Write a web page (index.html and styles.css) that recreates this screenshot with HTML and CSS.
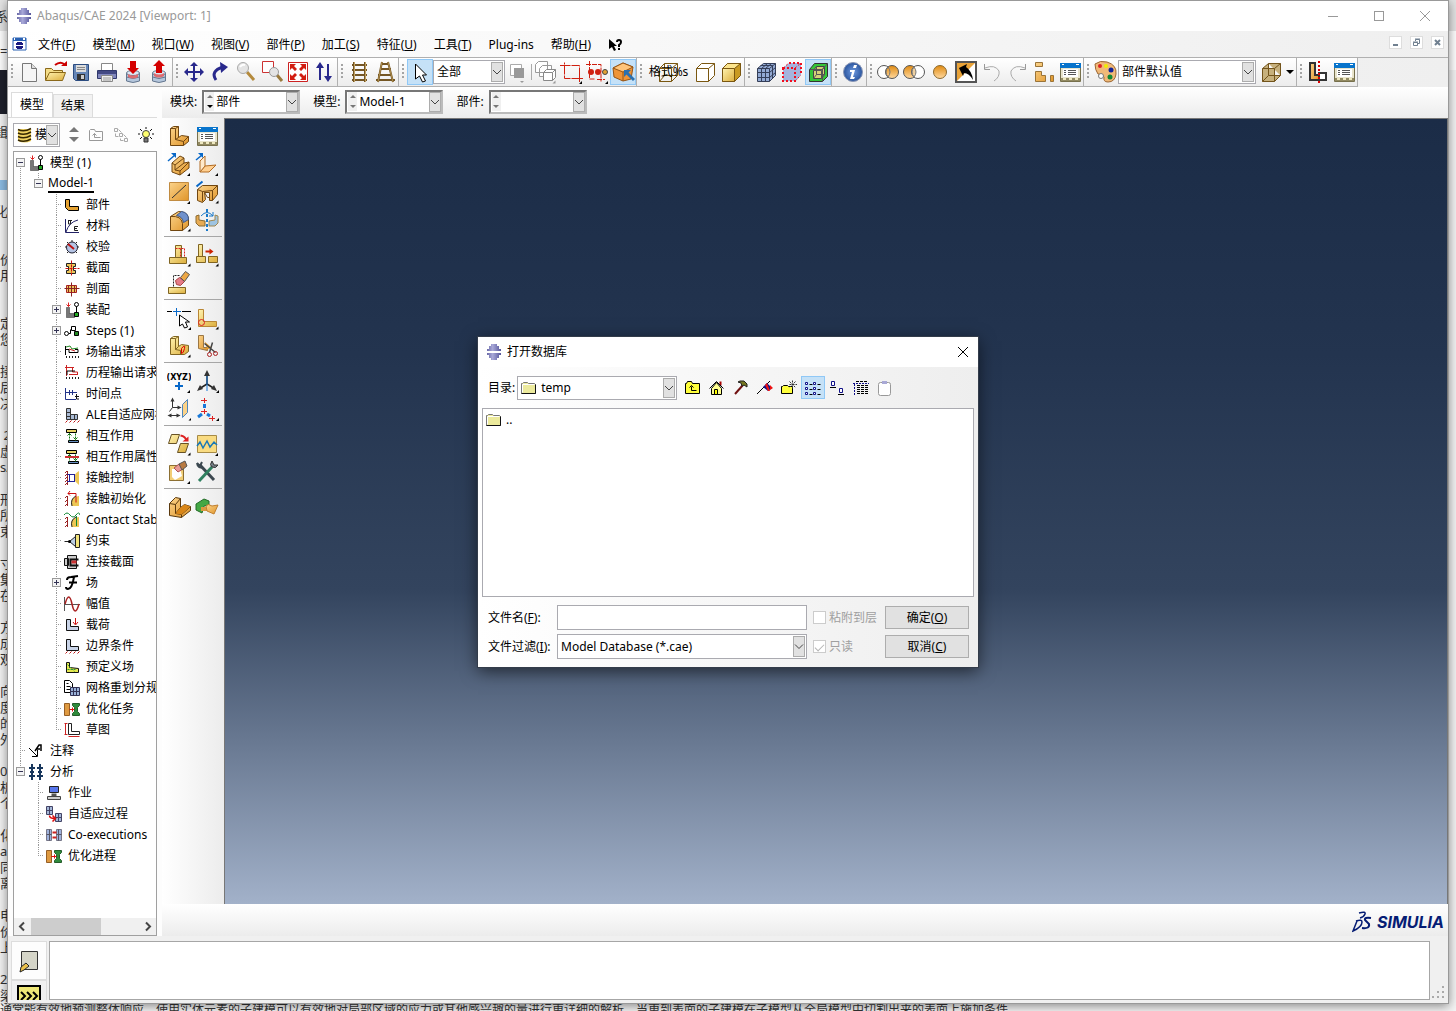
FILE: index.html
```html
<!DOCTYPE html>
<html lang="zh-CN">
<head>
  <meta charset="UTF-8">
  <meta name="viewport" content="width=device-width, initial-scale=1.0">
  <title>Abaqus/CAE 2024 [Viewport: 1]</title>
  <link rel="stylesheet" href="styles.css">
</head>
<body>
  <!-- Shared icons -->
  <svg class="sprite" aria-hidden="true">
    <defs>
      <linearGradient id="gold" x1="0" y1="0" x2="1" y2="1"><stop offset="0" stop-color="#fbd38a"/><stop offset="1" stop-color="#e0952a"/></linearGradient>
      <linearGradient id="sand" x1="0" y1="0" x2="1" y2="1"><stop offset="0" stop-color="#fff3b0"/><stop offset="1" stop-color="#dcae3c"/></linearGradient>
      <linearGradient id="sun" x1="0" y1="0" x2="0" y2="1"><stop offset="0" stop-color="#e08a10"/><stop offset="1" stop-color="#ffd9a0"/></linearGradient>
      <radialGradient id="blue"><stop offset="0" stop-color="#6f9ae0"/><stop offset="1" stop-color="#2a559e"/></radialGradient>
      <linearGradient id="purple"><stop offset="0" stop-color="#6a6aa8"/><stop offset=".4" stop-color="#a8a8d8"/><stop offset="1" stop-color="#55559a"/></linearGradient>
    </defs>
    <symbol id="app" viewBox="0 0 16 16"><path d="M5 0h6v2h2v3h2v2H1V5h2V2h2zM1 9h14v2h-2v3h-2v2H5v-2H3v-3H1z" fill="url(#purple)"/></symbol>
    <symbol id="mdi" viewBox="0 0 16 16"><path d="M1 1h13v12H1z" fill="#fff" stroke="#2a62b4"/><path d="M1 1h13v3H1z" fill="#2a62b4"/><path d="M11 1h2v2h-2zM2 1h1v2H2z" fill="#fff"/><path d="M5 5h5v1h1v2H4V6h1zM4 9h7v2h-1v1H5v-1H4z" fill="#1a1a80"/></symbol>
    <symbol id="new" viewBox="0 0 24 24"><path d="M5.500 3.500h9l5 5v13h-14z" fill="#f5f5f5" stroke="#777"/><path d="M14.500 3.500v5h5" fill="#ddd" stroke="#777"/></symbol>
    <symbol id="open" viewBox="0 0 24 24"><path d="M2.500 20V8.500h6l2 2h9v3" fill="#f4dd88" stroke="#8a681a"/><path d="M2.500 20.500l4-8h16l-3 8z" fill="url(#sand)" stroke="#8a681a"/><path d="M12 5q5-4 9-1" fill="none" stroke="#c00" stroke-width="2"/><path d="M18 6h6V1z" fill="#c00"/></symbol>
    <symbol id="save" viewBox="0 0 24 24"><path d="M4.500 4.500h15v16h-13l-2-2z" fill="#6686b6" stroke="#2b4c80"/><path d="M7 5h10v7H7z" fill="#ddd"/><path d="M8 7.500h8M8 9.500h8" stroke="#888"/><path d="M8 14h8v6H8z" fill="#333"/><path d="M12 15h3v4h-3z" fill="#ccc"/></symbol>
    <symbol id="print" viewBox="0 0 24 24"><path d="M6.500 3.500h11v7h-11z" fill="#fff" stroke="#888"/><path d="M2.500 10.500h19v8h-19z" fill="#8187bd" stroke="#30386c"/><path d="M3 11h18v3H3z" fill="#434984"/><path d="M6.500 15.500h11v6h-11z" fill="#eee" stroke="#888"/><path d="M8 18h8M8 20h8" stroke="#999"/></symbol>
    <symbol id="db" viewBox="0 0 24 24"><path d="M5.500 13v8q6.500 3 13 0v-8" fill="#b4c6dc" stroke="#667890"/><ellipse cx="12" cy="13" rx="6.500" ry="2.500" fill="#dce6f2" stroke="#667890"/><path d="M5.500 17q6.500 3 13 0" fill="none" stroke="#667890"/></symbol>
    <symbol id="db-in" viewBox="0 0 24 24"><use href="#db"/><path d="M9 1h6v7h3l-6 6-6-6h3z" fill="#d40000"/><path d="M7 14q5 3 10 0v3q-5 3-10 0z" fill="#dc6c70"/></symbol>
    <symbol id="db-out" viewBox="0 0 24 24"><use href="#db"/><path d="M9 13h6V6h3l-6-6-6 6h3z" fill="#d40000"/><path d="M7 13q5 3 10 0v3q-5 3-10 0z" fill="#dc6c70"/></symbol>
    <symbol id="pan" viewBox="0 0 24 24"><path d="M12 5v14M5 12h14" stroke="#28288c" stroke-width="2"/><path d="M12 2l4 4H8zM12 22l4-4H8zM2 12l4-4v8zM22 12l-4-4v8z" fill="#28288c"/></symbol>
    <symbol id="rotate" viewBox="0 0 24 24"><path d="M8 20Q2 11 15 7" fill="none" stroke="#28288c" stroke-width="3"/><path d="M12 2l8 5-7 6z" fill="#28288c"/></symbol>
    <symbol id="zoom" viewBox="0 0 24 24"><path d="M13 12l7 8" stroke="#b48a3c" stroke-width="3"/><circle cx="9" cy="8" r="5.500" fill="#e4e4e4" stroke="#aaa"/><path d="M6 7q2-3 5-2" stroke="#fff" stroke-width="2" fill="none"/></symbol>
    <symbol id="boxzoom" viewBox="0 0 24 24"><path d="M2.500 1.500h11v11h-11z" fill="#fff" stroke="#c33"/><path d="M17 15l5 6" stroke="#9a7a3c" stroke-width="3"/><circle cx="14" cy="12" r="4.500" fill="#e4e4e4" stroke="#999"/></symbol>
    <symbol id="fit" viewBox="0 0 24 24"><path d="M2.500 2.500h19v19h-19z" fill="#fff" stroke="#c22"/><path d="M4 4h6L8 6l3 3-2 2-3-3-2 2zM20 4v6l-2-2-3 3-2-2 3-3-2-2zM4 20v-6l2 2 3-3 2 2-3 3 2 2zM20 20h-6l2-2-3-3 2-2 3 3 2-2z" fill="#d21c10"/></symbol>
    <symbol id="updown" viewBox="0 0 24 24"><path d="M8 20V7M16 4v13" stroke="#28288c" stroke-width="2"/><path d="M8 2l4 6H4zM16 22l4-6h-8z" fill="#28288c"/></symbol>
    <symbol id="ladder" viewBox="0 0 24 24"><path d="M7 2v20M18 2v20M5 5h15M5 10h15M5 15h15M5 20h15" stroke="#745624" stroke-width="2"/><path d="M7.500 2v20M18.500 2v20" stroke="#c0a060"/></symbol>
    <symbol id="persp" viewBox="0 0 24 24"><path d="M9 2L5 22M15 2l5 20M8 4h8M7 9h11M5 15h14M3 20h19" stroke="#745624" stroke-width="2" fill="none"/><path d="M9 2L5 22M15 2l5 20" stroke="#b09050"/></symbol>
    <symbol id="cursor" viewBox="0 0 24 24"><path d="M7.500 4v15l4-3 3 6 3-1-3-6h4z" fill="#fff" stroke="#000"/></symbol>
    <symbol id="squares" viewBox="0 0 24 24"><path d="M4.500 4.500h11v11h-11z" fill="#fff" stroke="#aaa"/><path d="M8 8h10v10H8z" fill="#999"/><path d="M14 21h4l-2 2z" fill="#999"/></symbol>
    <symbol id="cubes-gray" viewBox="-.5 -.5 24 24"><path d="M2 4l3-3h9v8l-3 3H2zM6 8l3-3h9v8l-3 3H6z" fill="#fff" stroke="#999"/><path d="M10 12l3-3h9v8l-3 3h-9zM10 12h9v8M19 12l3-3" fill="#fff" stroke="#888"/><path d="M19 23l3-3v3z" fill="#999"/></symbol>
    <symbol id="redrect" viewBox="0 0 24 24"><path d="M2.500 5.500h18v13h-15v-16" fill="none" stroke="#d02010" stroke-dasharray="9 1"/><path d="M1 5.500h4M15 18.500h9M20.500 14v8" stroke="#d02010"/><path d="M20 24l3-3v3z"/></symbol>
    <symbol id="reddots" viewBox="0 0 24 24"><path d="M1 4.500h15v17M4.500 1v18h5M12 19.500h8" fill="none" stroke="#d02010" stroke-dasharray="5 1"/><circle cx="6" cy="12" r="3" fill="#d02010"/><circle cx="13" cy="12" r="3" fill="#d02010"/><circle cx="20" cy="12" r="2.500" fill="#e2a030" stroke="#444"/><path d="M20 24l3-3v3z"/></symbol>
    <symbol id="orangebox" viewBox="0 0 24 24"><path d="M2 8l10-5 10 4-2 12-8 2-9-4z" fill="#ee9438" stroke="#965414"/><path d="M2 8l10-5 10 4-10 5z" fill="#ffc47a" stroke="#965414"/><path d="M12 12v9" stroke="#965414"/><path d="M15 12l8 8" stroke="#2a70b0" stroke-width="3"/><path d="M13 10h7l-7 7z" fill="#2a70b0"/></symbol>
    <symbol id="wirecube" viewBox="-.5 -.5 24 24"><path d="M3 8h12v13H3zM8 3h13v12H8zM3 8l5-5M15 8l6-5M3 21l5-6M15 21l6-6" fill="none" stroke="#7a5710"/></symbol>
    <symbol id="hidcube" viewBox="-.5 -.5 24 24"><path d="M3 8l5-5h13v12l-6 6H3zM3 8h12v13M15 8l6-5" fill="#fff" stroke="#7a5710"/></symbol>
    <symbol id="solidcube" viewBox="-.5 -.5 24 24"><path d="M3 8l5-5h13v12l-6 6H3z" fill="#c99a22" stroke="#7a5710"/><path d="M3 8h12v13H3z" fill="url(#sand)" stroke="#7a5710"/><path d="M3 8l5-5h13l-6 5z" fill="#fbe48c" stroke="#7a5710"/></symbol>
    <symbol id="meshcube" viewBox="-.5 -.5 24 24"><path d="M3 8l6-5h12v12l-6 6H3z" fill="#93aad4"/><path d="M3 8l6-5h12v12l-6 6H3zM3 8h12v13M15 8l6-5M7 8v13M11 8v13M3 12h12l6-5M3 17h12l6-5M6 5h12v13M13 3L7 8M17 3l-6 5" fill="none" stroke="#343e58"/></symbol>
    <symbol id="redcube" viewBox="0 0 24 24"><path d="M3 8l6-5h12v12l-5 6H3z" fill="#a4b4de"/><path d="M3 8h12v13H3zM9 3h12v12" fill="none" stroke="#f01020" stroke-width="2" stroke-dasharray="2 2"/><path d="M3 8l6-5M15 8l6-5M15 21l6-6" stroke="#f01020" stroke-dasharray="2 2"/></symbol>
    <symbol id="greencube" viewBox="-.5 -.5 24 24"><path d="M3 9l5-6h13v13l-5 5H3z" fill="#34c638" stroke="#333"/><path d="M7 10l3-4h8v8l-3 4H7z" fill="#d5d278" stroke="#444"/><path d="M7 10h8v8M15 10l3-4M10 6v8h8M10 14l-3 4M3 9h13v12M16 9l5-6" fill="none" stroke="#555"/></symbol>
    <symbol id="info" viewBox="0 0 24 24"><circle cx="12" cy="12" r="9.500" fill="url(#blue)" stroke="#8a96b4"/><path d="M13 5h3l-1 3h-3zM9 10h5l-2 7h2l-1 2H9l2-7H9z" fill="#fff"/></symbol>
    <symbol id="venn-r" viewBox="0 0 24 24"><circle cx="8" cy="12" r="6.500" fill="#fff" stroke="#555"/><circle cx="16" cy="12" r="6.500" fill="url(#sun)" stroke="#555"/><path d="M12 7q4 5 0 10q-4-5 0-10" fill="none" stroke="#777"/></symbol>
    <symbol id="venn-l" viewBox="0 0 24 24"><circle cx="8" cy="12" r="6.500" fill="url(#sun)" stroke="#555"/><circle cx="16" cy="12" r="6.500" fill="#fff" stroke="#555"/><path d="M12 7q4 5 0 10q-4-5 0-10" fill="#eed0a0" stroke="#777"/></symbol>
    <symbol id="circle" viewBox="0 0 24 24"><circle cx="12" cy="12" r="6.500" fill="url(#sun)" stroke="#8b6a30"/></symbol>
    <symbol id="replace" viewBox="0 0 24 24"><path d="M2 2h20v20H2z" fill="#fff"/><path d="M2 2h20L2 22z" fill="#e9a338"/><path d="M2 2h20v20H2z" fill="none" stroke="#555" stroke-width="2"/><path d="M5 8l8-4-1 3q6 4 7 13-4-7-9-7l-1 3z"/></symbol>
    <symbol id="undo" viewBox="0 0 24 24"><path d="M5 8q10-4 14 3 1 6-5 10" fill="none" stroke="#aaa"/><path d="M4.500 4v5.500H10" fill="none" stroke="#999"/></symbol>
    <symbol id="redo" viewBox="0 0 24 24"><path d="M19 8Q9 4 5 11q-1 6 5 10" fill="none" stroke="#aaa"/><path d="M19.500 4v5.500H14" fill="none" stroke="#999"/></symbol>
    <symbol id="pieces" viewBox="0 0 24 24"><path d="M3.500 2.500h7v4h-7zM3.500 11.500h6v4h4v6h-10zM18.500 15.500h3v6h-3z" fill="url(#gold)" stroke="#9a7438"/></symbol>
    <symbol id="table" viewBox="0 0 24 24"><path d="M2.500 3.500h20v18h-20z" fill="#e8e4cc" stroke="#77704c"/><path d="M2 3h21v5H2z" fill="#0874cc"/><path d="M4 4h2v1H4zM18 4h3v1h-3z" fill="#fff"/><path d="M5 9h15v8H5z" fill="#fff"/><path d="M6 10.500h2M10 10.500h8M6 12.500h2M10 12.500h8M6 14.500h2M10 14.500h8" stroke="#555"/><path d="M3 18h19v3H3z" fill="#938b63"/><path d="M5 19h3M11 19h3M17 19h3" stroke="#eee8c0" stroke-width="2"/></symbol>
    <symbol id="palette" viewBox="0 0 24 24"><path d="M2 4q5-4 12-2 10 3 9 12-1 8-8 8-5 0-4-5-1-3-6-3-3-4-3-10z" fill="#f0b978" stroke="#9c6632"/><circle cx="7" cy="6" r="2" fill="#d22"/><circle cx="13" cy="6" r="2" fill="#ee0"/><circle cx="18" cy="10" r="2.500" fill="#129"/><circle cx="17" cy="17" r="2.500" fill="#183"/><circle cx="8" cy="16" r="2.500" fill="#fff" stroke="#777"/></symbol>
    <symbol id="tancube" viewBox="-.5 -.5 24 24"><path d="M3 8l6-5h12v12l-6 6H3zM3 8h12v13M15 8l6-5M9 3v12h12M9 15l-6 6" fill="#c6b07c" stroke="#73541b"/></symbol>
    <symbol id="partcut" viewBox="0 0 24 24"><path d="M4 3h5v12h4v5H4z" fill="url(#gold)" stroke="#333" stroke-width="2"/><path d="M13 13h7v7h-7z" fill="#fff" stroke="#333" stroke-width="2"/><path d="M13 1v22" stroke="#d00" stroke-width="2" stroke-dasharray="2 2"/></symbol>
    <symbol id="help" viewBox="0 0 16 16"><path d="M1 2v10l3-2 2 4 2-1-2-4h3z"/><path d="M9 5q0-2 2-2t2 2q0 2-2 3v2" fill="none" stroke="#000" stroke-width="2"/><path d="M10 11h2v2h-2z"/></symbol>

    <symbol id="part" viewBox="-.5 -.5 24 24"><path d="M3 4l3-2h5v11l3-2 7 1v5l-5 4H3z" fill="url(#gold)" stroke="#704611"/><path d="M3 4h5v11l8 2v4M8 4l3-2M8 15l3-2M16 17l5-5" fill="none" stroke="#704611"/></symbol>
    <symbol id="extrude" viewBox="0 0 24 24"><path d="M5 11l8-7 4 2v5l5-1v6l-9 7-8-3z" fill="url(#gold)" stroke="#704611"/><path d="M5 11l3 2v5l5 1v4M8 13l9-7M8 18l9-7M13 19l9-9" fill="none" stroke="#704611"/><path d="M1 9l7-6" stroke="#0868c8" stroke-width="1.500"/><path d="M4 1h5v5z" fill="#0868c8"/><path d="M20 24l3-3v3z"/></symbol>
    <symbol id="shell" viewBox="0 0 24 24"><path d="M5 20l5-6 11-1-7 7z" fill="#ffcf90" stroke="#b26c24"/><path d="M5 20V9l5-5v10z" fill="#ffe9ca" stroke="#b26c24"/><path d="M1 8l6-5" stroke="#0868c8" stroke-width="1.500"/><path d="M3 1h5v5z" fill="#0868c8"/><path d="M20 24l3-3v3z"/></symbol>
    <symbol id="wire" viewBox="0 0 24 24"><path d="M2.500 2.500h19v18h-19z" fill="url(#gold)" stroke="#c18b40"/><path d="M5 18L19 5" stroke="#333"/><path d="M20 24l3-3v3z"/></symbol>
    <symbol id="cutext" viewBox="-.5 -.5 24 24"><path d="M2 9l5-4h15v9l-5 6h-3v-8H9l1 7-3 3-5-2z" fill="url(#gold)" stroke="#704611"/><path d="M2 9l5 2 10-1 5-5M7 11v10M17 10v10M9 12l3 5h2" fill="none" stroke="#704611"/><path d="M1 6l6-5" stroke="#0868c8" stroke-width="2"/><path d="M20 23l3-3v3z"/></symbol>
    <symbol id="round" viewBox="-.5 -.5 24 24"><path d="M3 8l8-5q9 0 10 7v7l-6 5H3z" fill="url(#gold)" stroke="#704611"/><path d="M3 8q11-1 12 7v7" fill="none" stroke="#704611"/><path d="M9 7l5-4q7 1 7 8l-5 3q-1-6-7-7z" fill="#6f91cc" stroke="#3b588c"/><path d="M20 23l3-3v3z"/></symbol>
    <symbol id="mirror" viewBox="0 0 24 24"><path d="M1 8l3-1v5l6 1v5H4l-3-3z" fill="#e7ab54" stroke="#8a6a30"/><path d="M23 8l-3-1v5l-6 1v5h6l3-3z" fill="#9ec4e2" stroke="#a08850"/><path d="M12 1v22" stroke="#1878c8" stroke-width="2" stroke-dasharray="3 2"/><path d="M6 8q6-7 12 0M18 4v4h-4" fill="none" stroke="#1878c8"/></symbol>
    <symbol id="support" viewBox="-.5 -.5 24 24"><path d="M8 2h6v12H8zM2 14h17v6H2z" fill="url(#sand)" stroke="#806523"/><path d="M8 5h9v9M13 5v9" fill="none" stroke="#d22" stroke-dasharray="2 1"/><path d="M20 23l3-3v3z"/></symbol>
    <symbol id="offset" viewBox="-.5 -.5 24 24"><path d="M3 1h4v12H3zM1 13h9v6H1zM13 13h9v6h-9z" fill="url(#sand)" stroke="#806523"/><path d="M10 8h5" stroke="#c20" stroke-width="2"/><path d="M14 5l4 3-4 3z" fill="#c20"/><path d="M20 23l3-3v3z"/></symbol>
    <symbol id="erase" viewBox="-.5 -.5 24 24"><path d="M1 16h17v6H1z" fill="url(#sand)" stroke="#806523"/><path d="M6 15V4h6" fill="none" stroke="#222" stroke-dasharray="2 1"/><path d="M8 9l4-3 5 4-4 4-4-1z" fill="#e57c88" stroke="#a44"/><path d="M13 6l5-6 4 3-5 7z" fill="#eda745" stroke="#555"/></symbol>
    <symbol id="pointline" viewBox="0 0 24 24"><path d="M0 5.500h5M15 5.500h9" stroke="#000"/><path d="M6 5.500h8M9.500 2v8" stroke="#0868c8" stroke-width="1"/><path d="M12.500 9v11l3-2 2 4 3-1-2-5h4z" fill="#fff" stroke="#000"/><path d="M21 24l3-3v3z"/></symbol>
    <symbol id="edge" viewBox="-.5 -.5 24 24"><path d="M3 3h5v12h13v5H3z" fill="url(#sand)" stroke="#b98635"/><circle cx="6" cy="16" r="3" fill="none" stroke="#d22"/><path d="M20 23l3-3v3z"/></symbol>
    <symbol id="face" viewBox="-.5 -.5 24 24"><path d="M3 4l3-2h5v10l3-2 7 1v6l-4 3H3z" fill="url(#sand)" stroke="#806523"/><path d="M3 4h5v11l5 1v4M8 4l3-2M8 15l3-3" fill="none" stroke="#806523"/><path d="M14 14q4-5 3 0t-3 5z" fill="none" stroke="#d00"/><path d="M20 23l3-3v3z"/></symbol>
    <symbol id="scissor" viewBox="-.5 -.5 24 24"><path d="M3 1h5v12h4v3L3 14z" fill="url(#gold)" stroke="#9b7744"/><path d="M9 7l7 6-4 2z" fill="#e8a030"/><path d="M9 9l11 9M17 8l-3 10" stroke="#444" stroke-width="1.500"/><circle cx="14" cy="20" r="2" fill="none" stroke="#a22"/><circle cx="20" cy="19" r="2" fill="none" stroke="#a22"/></symbol>
    <symbol id="xyz" viewBox="0 0 24 24"><text x="12" y="11" text-anchor="middle" class="xyz-text">(XYZ)</text><path d="M8 17h8M12 13v8" stroke="#0868c8" stroke-width="2"/><path d="M20 24l3-3v3z"/></symbol>
    <symbol id="axes" viewBox="0 0 24 24"><path d="M12 5v10M12 15l-8 5M12 15l8 5" stroke="#222" stroke-width="1.500"/><path d="M12 1l3 6H9zM2 22l3-6 3 4zM22 22l-3-6-3 4z" fill="#333"/><path d="M12 7v15" stroke="#1878d8"/><path d="M21 24l3-3v3z"/></symbol>
    <symbol id="plane" viewBox="-.5 -.5 24 24"><path d="M5 10V3M5 10l-3 4M5 10h7M2 18h10" stroke="#333"/><path d="M5 0l2 4H3zM14 10l-4-2v4zM0 18l4-2v4zM13 18l-4-2v4z" fill="#333"/><path d="M15 7l5-5v13l-5 5z" fill="#fbd38a" stroke="#4e86bd"/><path d="M21 23l3-3v3z"/></symbol>
    <symbol id="points" viewBox="0 0 24 24"><path d="M6 3.500h6M9.500 1v5M6 14.500h6M9.500 12v5M14 21.500h6M17.500 19v5" stroke="#d22"/><path d="M9.500 7v4M3 20l4-3M12 17l3 2" stroke="#1878d8" stroke-width="3"/><path d="M21 24l3-3v3z"/></symbol>
    <symbol id="moveplane" viewBox="-.5 -.5 24 24"><path d="M4 2h8l-3 9H1zM13 11h8l-3 9h-8z" fill="url(#sand)" stroke="#675226"/><path d="M13 3q5 1 6 5" fill="none" stroke="#d22" stroke-width="2"/><path d="M15 9h6V4z" fill="#d22"/><path d="M20 23l3-3v3z"/></symbol>
    <symbol id="wave" viewBox="0 0 24 24"><path d="M2.500 3.500h19v17h-19z" fill="#f9db81" stroke="#a68a46"/><path d="M2 14l3-4 3 6 4-7 3 6 4-5 3 3" fill="none" stroke="#1878b8" stroke-width="1.500"/><path d="M20 24l3-3v3z"/></symbol>
    <symbol id="clean" viewBox="0 0 24 24"><path d="M2.500 5.500h14v15h-14z" fill="#f2ce75" stroke="#8c6f32"/><path d="M5 9h8l2 7-7 4-3-3z" fill="#fff"/><path d="M7 8l5-4 4 5-5 3z" fill="#e89a97" stroke="#a55"/><path d="M12 4l6-3 2 5-5 4z" fill="#b87a42" stroke="#555"/><path d="M20 24l3-3v3z"/></symbol>
    <symbol id="tools" viewBox="0 0 24 24"><path d="M5 5l14 15" stroke="#3c4850" stroke-width="3"/><path d="M2 3l3 3 2-4M2 3q1 6 6 4" stroke="#3c4850" stroke-width="2" fill="none"/><path d="M4 21l13-14" stroke="#2f8060" stroke-width="3"/><path d="M17 1q-3 4 0 6 4 2 6-2l-4 0z" fill="#758088" stroke="#333"/></symbol>
    <symbol id="fillet" viewBox="-.5 -.5 24 24"><path d="M2 8l6-6 5 1v9l4-3 6 2v4l-9 7-12-2z" fill="url(#gold)" stroke="#5a390e"/><path d="M2 8l6 1v9l6 1v3M8 9l5-6M8 18l5-6M14 19l9-8" fill="none" stroke="#5a390e"/><path d="M8 18l5-6 4-3 6 2-9 8z" fill="#d98618"/></symbol>
    <symbol id="repair" viewBox="0 0 24 24"><path d="M1 9l8-5 5 2v4l-5 1-2 7-6-3z" fill="#43a844" stroke="#246b28"/><path d="M6 12h6v4H6z" fill="#d99a40"/><path d="M11 11q2-3 6 0l6-1-4 9-7-3z" fill="url(#gold)" stroke="#c08030"/></symbol>

    <symbol id="t-stack" viewBox="0 0 16 16"><path d="M1 2v12q7 3 13 0V2z" fill="#eed060"/><path d="M1 2.500q6 3 13-1M1 6q6 3 13-1M1 9.500q6 3 13-1M1 13q6 3 13-1" fill="none" stroke="#332600" stroke-width="1.500"/></symbol>
    <symbol id="t-up" viewBox="-.5 -.5 16 16"><path d="M1 13V3l1-1h4l1 2h7v9z" fill="none" stroke="#999"/><path d="M12 10H6V6M4 8l2-2 2 2" fill="none" stroke="#999"/></symbol>
    <symbol id="t-link" viewBox="-.5 -.5 16 16"><path d="M1 1h3v3H1zM6 6h3v3H6zM11 11h3v3h-3zM5 2l3 3M10 7l3 3M2 6v3h3M7 11v2h3" fill="none" stroke="#aaa"/></symbol>
    <symbol id="t-bulb" viewBox="0 0 16 16"><circle cx="8" cy="7" r="3.500" fill="#ffff70" stroke="#444"/><path d="M6 11h4v4H6z" fill="#777" stroke="#333"/><path d="M8 0v2M2 2l2 2M14 2l-2 2M0 7h2M14 7h2M2 12l2-2M14 12l-2-2" stroke="#111"/></symbol>
    <symbol id="t-model" viewBox="-.5 -.5 16 16"><path d="M2 5h3v6h5v4H2z" fill="#777" stroke="#333" stroke-dasharray="1 1"/><path d="M4 0v4M2 2l2 2 2-2" stroke="#d22" fill="none"/><circle cx="12" cy="2" r="2" fill="#fff" stroke="#000"/><path d="M12 4v6" stroke="#000"/><path d="M10 10h4v4h-4z" fill="#2a2" stroke="#000"/></symbol>
    <symbol id="t-part" viewBox="0 0 16 16"><path d="M1.500 2.500h4v7h9v4h-10l-3-3z" fill="#e4a130" stroke="#000"/></symbol>
    <symbol id="t-material" viewBox="0 0 16 16"><path d="M1.500 1v13.500H15M2 14q3-10 12-12" fill="none" stroke="#226"/><path d="M4 2.500h4M4.500 3v3h2V3M14 8.500h-3.500v4H14M11 10.500h2" fill="none" stroke="#222"/></symbol>
    <symbol id="t-calib" viewBox="0 0 16 16"><circle cx="8" cy="8.500" r="5.500" fill="#b4c4e4" stroke="#223"/><path d="M4 5l6 5" stroke="#b11" stroke-width="2"/><path d="M8 1v2M1 8h2M13 8h2M3 3l1 1M13 3l-1 1M3 14l1-1M13 14l-1-1" stroke="#222"/></symbol>
    <symbol id="t-section" viewBox="-.5 -.5 16 16"><path d="M2 3h9v3H9v4h2v3H2v-3h2V6H2z" fill="#edc65a" stroke="#222"/><path d="M7 0v16M1 8h14" stroke="#c11" stroke-dasharray="3 1"/></symbol>
    <symbol id="t-profile" viewBox="-.5 -.5 16 16"><path d="M2 4h10v7H2z" fill="#edc65a" stroke="#a22"/><path d="M7 1v14M0 7h15M4 4v7M10 4v7" stroke="#822"/></symbol>
    <symbol id="t-steps" viewBox="-.5 -.5 16 16"><circle cx="2" cy="10" r="2" fill="#fff" stroke="#000"/><path d="M4 10h2V6M7 3h4v4H7z" fill="#fff" stroke="#000"/><path d="M10 8h4v4h-4z" fill="#282" stroke="#000"/></symbol>
    <symbol id="t-field" viewBox="0 0 16 16"><path d="M1.500 2v9M2 5.500h3v3h9v-3h-3" fill="none" stroke="#000"/><path d="M2 3l4-1 2 3 6-1" fill="none" stroke="#282"/><path d="M5 5l6 2" stroke="#c22"/><path d="M2.500 12v3M5.500 12v3M8.500 12v3M11.500 12v3M14.500 12v3" stroke="#222" stroke-dasharray="2 1"/></symbol>
    <symbol id="t-hist" viewBox="0 0 16 16"><path d="M2.500 0v11M1 2.500h9M8.500 3v4h5v3M5 9.500h8" fill="none" stroke="#c22"/><path d="M3 10V6h8" fill="none" stroke="#000"/><path d="M2.500 12v3M5.500 12v3M8.500 12v3M11.500 12v3M14.500 12v3" stroke="#222" stroke-dasharray="2 1"/></symbol>
    <symbol id="t-time" viewBox="0 0 16 16"><path d="M1.500 2v11.500H12M2 6.500h11M5.500 4v5M8.500 4v5" fill="none" stroke="#238"/><path d="M12.500 8v5H15M11 10.500h4" stroke="#111" fill="none"/></symbol>
    <symbol id="t-ale" viewBox="-.5 -.5 16 16"><path d="M2 1h4v6h7v5H2z" fill="#aabbd5" stroke="#333"/><path d="M2 5h4M6 7v5M10 7v5M2 9h4" stroke="#333"/><path d="M1 15l2-2M5 15l2-2M9 15l2-2M13 15l2-2" stroke="#b11"/></symbol>
    <symbol id="t-inter" viewBox="-.5 -.5 16 16"><path d="M2 1h10v3H2z" fill="#e9d468" stroke="#000"/><path d="M4 12h10v2H4z" fill="#668dc0" stroke="#000"/><path d="M5 5v7M11 5v7" stroke="#171" stroke-dasharray="2 1"/><path d="M3 7l2-2 2 2M9 9l2 2 2-2" stroke="#171" fill="none"/></symbol>
    <symbol id="t-prop" viewBox="0 0 16 16"><use href="#t-inter"/><path d="M1 8h14" stroke="#c33" stroke-width="2"/></symbol>
    <symbol id="t-contact" viewBox="0 0 16 16"><path d="M3.500 1v14M1 3l2-2M1 6l2-2M1 9l2-2M1 12l2-2M1 15l2-2" stroke="#922"/><path d="M15 1q-10 6 0 14z" fill="#edc755"/><path d="M5.500 4v8M10.500 4v8M3 4.500h8M3 11.500h8" fill="none" stroke="#229"/></symbol>
    <symbol id="t-init" viewBox="0 0 16 16"><path d="M3.500 5v10M1 7l2-2M1 11l2-2M1 15l2-2" stroke="#922"/><path d="M15 5q-10 1-7 10h7z" fill="#edc755"/><path d="M12 5q-6 3-4 10" fill="none" stroke="#222"/><path d="M4 2.500h8v9M6 0L4 2.500l2 2" fill="none" stroke="#c11"/></symbol>
    <symbol id="t-stab" viewBox="0 0 16 16"><path d="M3.500 5v10M1 7l2-2M1 11l2-2M1 15l2-2" stroke="#922"/><path d="M15 5q-10 1-7 10h7z" fill="#edc755"/><path d="M12 5q-6 3-4 10" fill="none" stroke="#222"/><path d="M0 3q3-4 6 0t6 0 4 0M12.500 4v10" fill="none" stroke="#183"/></symbol>
    <symbol id="t-constraint" viewBox="-.5 -.5 16 16"><path d="M11 1h4v13h-4z" fill="#f3e47b" stroke="#222"/><path d="M0 8h5l6-5v10L5 8" fill="#bed0e6" stroke="#222"/><circle cx="5" cy="8" r="1.500"/></symbol>
    <symbol id="t-conn" viewBox="-.5 -.5 16 16"><path d="M3 1h9v13H3zM0 4h4v7H0z" fill="#ccc" stroke="#111"/><path d="M14 5H6v6h8" fill="none" stroke="#111" stroke-width="2"/><path d="M7 6h5v3H7z" fill="#c33"/></symbol>
    <symbol id="t-f" viewBox="0 0 16 16"><path d="M3 5q0-3 4-3l7-1M10 2Q8 14 4 14q-2 0-2-2M5 7.500h8" fill="none" stroke="#000" stroke-width="2"/></symbol>
    <symbol id="t-amp" viewBox="0 0 16 16"><path d="M.500 1v14M0 8.500h16" stroke="#555"/><path d="M1 8q4-14 7 0t7 0" fill="none" stroke="#a22" stroke-width="1.500"/></symbol>
    <symbol id="t-l" viewBox="-.5 -.5 16 16"><path d="M2 2h4v7h8v4H2z" fill="#c9d4e8" stroke="#111"/></symbol>
    <symbol id="t-load" viewBox="0 0 16 16"><use href="#t-l"/><path d="M11.500 1v6M9 5l2.500 3L14 5" stroke="#c11" fill="none"/></symbol>
    <symbol id="t-bc" viewBox="-.5 -.5 16 16"><path d="M2 1h4v7h8v4H2z" fill="#c9d4e8" stroke="#111"/><path d="M1 15l2-2M5 15l2-2M9 15l2-2M13 15l2-2" stroke="#b11"/></symbol>
    <symbol id="t-pre" viewBox="-.5 -.5 16 16"><path d="M2 3h3v5l9 1v4H2z" fill="#e5e850" stroke="#111"/><path d="M3 5l7 7M3 10h9" stroke="#393" stroke-dasharray="2 1"/></symbol>
    <symbol id="t-remesh" viewBox="-.5 -.5 16 16"><path d="M0 0h5l3 3v9H0z" fill="#fff" stroke="#000"/><path d="M2 3h2M2 6h4M2 9h4" stroke="#000"/><path d="M6 7h9v8H6z" fill="#9ab2d8" stroke="#335"/><path d="M9 7v8M12 7v8M6 11h9" stroke="#335"/></symbol>
    <symbol id="t-opt" viewBox="-.5 -.5 16 16"><path d="M0 2h5v12H0z" fill="#df9a41" stroke="#965f26"/><path d="M8 2h7v2l-2 2v4l2 2v2H8v-2l2-2V6L8 4z" fill="#2e8a3b" stroke="#245c2a"/><path d="M5 8h5M8 6v4" stroke="#d11"/></symbol>
    <symbol id="t-sketch" viewBox="-.5 -.5 16 16"><path d="M4 1h3v8h8v3H4z" fill="#fff" stroke="#222"/><path d="M1 1v11M0 1h3M0 12h3M4 14h11" stroke="#c22"/></symbol>
    <symbol id="t-note" viewBox="0 0 16 16"><path d="M1 5l8 8M9.500 7v6.500H4" stroke="#000" fill="none"/><path d="M7 8l4-6h2v6M8 6h4" stroke="#000" stroke-width="1.500" fill="none"/></symbol>
    <symbol id="t-analysis" viewBox="0 0 16 16"><path d="M4 0v16M12 0v16" stroke="#17365c" stroke-width="2"/><path d="M1 3h6v2H1zM9 3h6v2H9zM1 11h6v2H1zM9 11h6v2H9zM2 7h4v2H2zM10 7h4v2h-4z" fill="#17365c"/></symbol>
    <symbol id="t-job" viewBox="-.5 -.5 16 16"><path d="M3 1h9v6H3z" fill="#5876ec" stroke="#222"/><path d="M5 8h5v3H5z" fill="#555"/><path d="M1 11h13v3H1z" fill="#ccc" stroke="#444"/></symbol>
    <symbol id="t-adapt" viewBox="-.5 -.5 16 16"><path d="M0 0h6v8H0zM9 7h6v8H9z" fill="#a5b8d8" stroke="#446"/><path d="M3 0v8M0 4h6M12 7v8M9 11h6" stroke="#446"/><path d="M3 9q0 3 5 3M6 9l3 3-3 3" fill="none" stroke="#d11" stroke-width="1.500"/></symbol>
    <symbol id="t-coexec" viewBox="-.5 -.5 16 16"><path d="M0 2h5v11H0zM10 2h5v11h-5z" fill="#9eb1dc" stroke="#778"/><path d="M3 2v11M0 7h5M12 2v11M10 7h5" stroke="#556"/><path d="M6 5h4M6 10h4" stroke="#c22" stroke-width="2"/></symbol>

    <symbol id="folder" viewBox="-.5 -.5 16 16"><path d="M0 13V3h1l1-1h4l1 1h6l1 1v9z" fill="#ecea9c" stroke="#777"/><path d="M0 13h14V4" stroke="#111" fill="none"/><path d="M1 4h12M1 4v8" stroke="#fff" fill="none"/></symbol>
    <symbol id="d-up" viewBox="-.5 -.5 16 16"><path d="M0 3h1l1-2h4l1 2h7v10H0z" fill="#ffff3c" stroke="#000"/><path d="M4 7l2-2 2 2M6 6v4h5" fill="none" stroke="#000"/></symbol>
    <symbol id="d-home" viewBox="-.5 -.5 16 16"><path d="M10 1h2v4h-2z" fill="#a00"/><path d="M2 8l5-6 5 6v6H2z" fill="#ffff90" stroke="#000"/><path d="M0 8l7-7 7 7" fill="none" stroke="#000"/><path d="M5 9h3v5H5z" fill="#ff0" stroke="#000"/></symbol>
    <symbol id="d-hammer" viewBox="0 0 16 16"><path d="M10 5l-8 9" stroke="#701010" stroke-width="2"/><path d="M5 2l2-1h4l3 3v3l-3-2-2 1-1-3z" fill="#777720" stroke="#222"/></symbol>
    <symbol id="d-mark" viewBox="0 0 16 16"><path d="M0 14L13 1" stroke="#000"/><path d="M6 7l4-4 5 5-4 3z" fill="#118"/><path d="M8 5l2-2 3 8h-2zM13 5l3 3-3 2z" fill="#e11"/></symbol>
    <symbol id="d-new" viewBox="-.5 -.5 16 16"><path d="M0 13V6h1l1-1h4l1 1h4v7z" fill="#ffff3c" stroke="#000"/><path d="M11 0v8M8 4h8M8 1l6 6M14 1L8 7" stroke="#333" stroke-dasharray="2 1"/></symbol>
    <symbol id="d-list" viewBox="-.5 -.5 16 16"><path d="M0 2h2v2H0zM0 7h2v2H0zM0 12h2v2H0zM8 2h2v2H8zM8 7h2v2H8zM8 12h2v2H8z" fill="#fff" stroke="#118"/><path d="M4 4h3M4 9h3M4 14h3M12 4h3M12 9h3M12 14h3" stroke="#000"/></symbol>
    <symbol id="d-icons" viewBox="0 0 16 16"><path d="M2.500 1.500h3v4h-3zM10.500 8.500h3v4h-3z" fill="#fff" stroke="#118"/><path d="M1 7.500h6M9 14.500h6" stroke="#000"/></symbol>
    <symbol id="d-detail" viewBox="0 0 16 16"><path d="M0 3.500h16M1.500 4v11" stroke="#118" stroke-dasharray="2 1"/><path d="M3 1.500h12M4 5.500h11M4 7.500h11M4 9.500h11M4 11.500h11M4 13.500h11" stroke="#000" stroke-dasharray="3 1"/></symbol>
    <symbol id="d-clip" viewBox="0 0 16 16"><rect x="1.500" y="2.500" width="12" height="13" rx="2" fill="#fff" stroke="#999"/><path d="M5 1h5v3H5z" fill="#a9a9d6"/></symbol>
    <symbol id="msg" viewBox="0 0 20 24"><path d="M2.500 2.500h16v18h-16z" fill="#d5d5c8" stroke="#333"/><path d="M1 23l1-5 5-4 3 3-5 4z" fill="#ebc14a" stroke="#222"/></symbol>
    <symbol id="cli" viewBox="0 0 24 20"><path d="M1 1h22v18H1z" fill="#eee777" stroke="#000" stroke-width="2"/><path d="M4 7l4 4-4 4M10 7l4 4-4 4M16 7l4 4-4 4" fill="none" stroke="#000" stroke-width="2"/></symbol>
    <symbol id="ds" viewBox="0 0 20 22"><path d="M7 2q7-2 6 1-1 3-5 4M4 10q6-2 6 1 0 5-9 9l4-10" fill="none" stroke="#051c74" stroke-width="1.500"/><path d="M19 7q-7-1-6 2l4 4q1 5-7 4" fill="none" stroke="#051c74" stroke-width="2"/></symbol>
    <symbol id="close" viewBox="0 0 12 12"><path d="M1 1l10 10M11 1L1 11" stroke="currentColor"/></symbol>
    <symbol id="chevron" viewBox="0 0 10 8"><path d="M1 2l4 4 4-4" fill="none" stroke="#444"/></symbol>
  </svg>

  <div class="desktop">
    <!-- Document window lying behind -->
    <div class="behind">
      <div class="behind-tabs">系</div>
      <div class="behind-bar">=</div>
      <div class="behind-dark"></div>
      <div class="behind-edit">辑</div>
      <div class="behind-blue"></div>
<pre class="behind-lines">化


价
用


定
您

接
后
决

 2
虚
s/

形
所
束

寸
集
在

方
成
观

向
度
的
外

04
析
个

化
a
同
离

电
价
上

23
梁</pre>
      <p class="behind-foot">通常能有效地预测整体响应。使用实体元素的子建模可以有效地对局部区域的应力或其他感兴趣的量进行更详细的解析。当更到表面的子建模在子模型从全局模型中切割出来的表面上施加条件</p>
    </div>

    <div class="window">
      <header class="titlebar">
        <svg class="i16"><use href="#app"/></svg>
        <span class="title">Abaqus/CAE 2024 [Viewport: 1]</span>
        <button class="winbtn" aria-label="Minimize"><span class="min"></span></button>
        <button class="winbtn" aria-label="Maximize"><span class="max"></span></button>
        <button class="winbtn" aria-label="Close"><svg class="i12"><use href="#close"/></svg></button>
      </header>

      <nav class="menubar">
        <svg class="i16"><use href="#mdi"/></svg>
        <button>文件(<u>F</u>)</button>
        <button>模型(<u>M</u>)</button>
        <button>视口(<u>W</u>)</button>
        <button>视图(<u>V</u>)</button>
        <button>部件(<u>P</u>)</button>
        <button>加工(<u>S</u>)</button>
        <button>特征(<u>U</u>)</button>
        <button>工具(<u>T</u>)</button>
        <button>Plug-ins</button>
        <button>帮助(<u>H</u>)</button>
        <button aria-label="Help"><svg class="i16"><use href="#help"/></svg></button>
        <div class="mdi-buttons">
          <button aria-label="Minimize viewport"><svg viewBox="0 0 11 11"><path d="M3 8h5" stroke="#708090" stroke-width="2"/></svg></button>
          <button aria-label="Restore viewport"><svg viewBox="0 0 11 11"><path d="M4.500 4V2.500h4v4H7M2.500 5.500h4v3h-4zM2 5h5M4 2h5" fill="none" stroke="#708090"/></svg></button>
          <button aria-label="Close viewport"><svg viewBox="0 0 11 11"><path d="M3 3l5 5M8 3L3 8" stroke="#708090" stroke-width="2"/></svg></button>
        </div>
      </nav>

      <div class="toolbar">
        <div class="group">
          <button aria-label="New"><svg><use href="#new"/></svg></button>
          <button aria-label="Open"><svg><use href="#open"/></svg></button>
          <button aria-label="Save"><svg><use href="#save"/></svg></button>
          <button aria-label="Print"><svg><use href="#print"/></svg></button>
          <button aria-label="Import"><svg><use href="#db-in"/></svg></button>
          <button aria-label="Export"><svg><use href="#db-out"/></svg></button>
        </div>
        <div class="group">
          <button aria-label="Pan"><svg><use href="#pan"/></svg></button>
          <button aria-label="Rotate"><svg><use href="#rotate"/></svg></button>
          <button aria-label="Zoom"><svg><use href="#zoom"/></svg></button>
          <button aria-label="Box zoom"><svg><use href="#boxzoom"/></svg></button>
          <button aria-label="Fit"><svg><use href="#fit"/></svg></button>
          <button aria-label="Cycle views"><svg><use href="#updown"/></svg></button>
        </div>
        <div class="group">
          <button aria-label="Parallel"><svg><use href="#ladder"/></svg></button>
          <button aria-label="Perspective"><svg><use href="#persp"/></svg></button>
        </div>
        <div class="group">
          <button class="on" aria-label="Select"><svg><use href="#cursor"/></svg></button>
          <span class="combo combo-all"><select aria-label="Selection filter"><option>全部</option></select><svg><use href="#chevron"/></svg></span>
          <button aria-label="Highlight"><svg><use href="#squares"/></svg></button>
          <i class="bar"></i>
          <button aria-label="Select from"><svg><use href="#cubes-gray"/></svg></button>
          <button aria-label="Drag shape"><svg><use href="#redrect"/></svg></button>
          <button aria-label="Drag scope"><svg><use href="#reddots"/></svg></button>
          <button class="on" aria-label="Hidden select"><svg><use href="#orangebox"/></svg></button>
        </div>
        <div class="group">
          <button class="format"><svg><use href="#wirecube"/></svg><span>格式%s</span></button>
          <button aria-label="Hidden line"><svg><use href="#hidcube"/></svg></button>
          <button aria-label="Shaded"><svg><use href="#solidcube"/></svg></button>
        </div>
        <div class="group">
          <button aria-label="Mesh"><svg><use href="#meshcube"/></svg></button>
          <button aria-label="Seeds"><svg><use href="#redcube"/></svg></button>
          <button class="on" aria-label="Reference"><svg><use href="#greencube"/></svg></button>
        </div>
        <div class="group">
          <button aria-label="Query"><svg><use href="#info"/></svg></button>
        </div>
        <div class="group">
          <button aria-label="Replace"><svg><use href="#venn-r"/></svg></button>
          <button aria-label="Remove"><svg><use href="#venn-l"/></svg></button>
          <button aria-label="Replace all"><svg><use href="#circle"/></svg></button>
          <button aria-label="Invert"><svg><use href="#replace"/></svg></button>
          <button aria-label="Undo"><svg><use href="#undo"/></svg></button>
          <button aria-label="Redo"><svg><use href="#redo"/></svg></button>
          <button aria-label="Display pieces"><svg><use href="#pieces"/></svg></button>
          <button aria-label="Display groups"><svg><use href="#table"/></svg></button>
        </div>
        <div class="group">
          <button aria-label="Color code"><svg><use href="#palette"/></svg></button>
          <span class="combo combo-color"><select aria-label="Color mapping"><option>部件默认值</option></select><svg><use href="#chevron"/></svg></span>
          <button aria-label="Translucency"><svg><use href="#tancube"/></svg></button>
          <button class="drop" aria-label="More"></button>
        </div>
        <div class="group">
          <button aria-label="View cut"><svg><use href="#partcut"/></svg></button>
          <button aria-label="View cut manager"><svg><use href="#table"/></svg></button>
        </div>
      </div>

      <main class="work">
        <aside class="side">
          <div class="tabs"><button class="tab active">模型</button><button class="tab">结果</button></div>
          <div class="tree-tools">
            <span class="combo combo-db"><svg class="i16"><use href="#t-stack"/></svg><select aria-label="Database"><option>模型数据库</option></select><svg><use href="#chevron"/></svg></span>
            <span class="spin big"></span>
            <svg class="i16"><use href="#t-up"/></svg>
            <svg class="i16"><use href="#t-link"/></svg>
            <svg class="i16"><use href="#t-bulb"/></svg>
          </div>
          <div class="tree-box">
            <ul class="tree">
              <li>
                <div class="row"><button class="toggle" aria-label="Collapse"></button><svg><use href="#t-model"/></svg><span>模型 (1)</span></div>
                <ul>
                  <li>
                    <div class="row"><button class="toggle" aria-label="Collapse"></button><span class="current">Model-1</span></div>
                    <ul>
                      <li><div class="row"><i></i><svg><use href="#t-part"/></svg><span>部件</span></div></li>
                      <li><div class="row"><i></i><svg><use href="#t-material"/></svg><span>材料</span></div></li>
                      <li><div class="row"><i></i><svg><use href="#t-calib"/></svg><span>校验</span></div></li>
                      <li><div class="row"><i></i><svg><use href="#t-section"/></svg><span>截面</span></div></li>
                      <li><div class="row"><i></i><svg><use href="#t-profile"/></svg><span>剖面</span></div></li>
                      <li><div class="row"><button class="toggle plus" aria-label="Expand"></button><svg><use href="#t-model"/></svg><span>装配</span></div></li>
                      <li><div class="row"><button class="toggle plus" aria-label="Expand"></button><svg><use href="#t-steps"/></svg><span>Steps (1)</span></div></li>
                      <li><div class="row"><i></i><svg><use href="#t-field"/></svg><span>场输出请求</span></div></li>
                      <li><div class="row"><i></i><svg><use href="#t-hist"/></svg><span>历程输出请求</span></div></li>
                      <li><div class="row"><i></i><svg><use href="#t-time"/></svg><span>时间点</span></div></li>
                      <li><div class="row"><i></i><svg><use href="#t-ale"/></svg><span>ALE自适应网格</span></div></li>
                      <li><div class="row"><i></i><svg><use href="#t-inter"/></svg><span>相互作用</span></div></li>
                      <li><div class="row"><i></i><svg><use href="#t-prop"/></svg><span>相互作用属性</span></div></li>
                      <li><div class="row"><i></i><svg><use href="#t-contact"/></svg><span>接触控制</span></div></li>
                      <li><div class="row"><i></i><svg><use href="#t-init"/></svg><span>接触初始化</span></div></li>
                      <li><div class="row"><i></i><svg><use href="#t-stab"/></svg><span>Contact Stab</span></div></li>
                      <li><div class="row"><i></i><svg><use href="#t-constraint"/></svg><span>约束</span></div></li>
                      <li><div class="row"><i></i><svg><use href="#t-conn"/></svg><span>连接截面</span></div></li>
                      <li><div class="row"><button class="toggle plus" aria-label="Expand"></button><svg><use href="#t-f"/></svg><span>场</span></div></li>
                      <li><div class="row"><i></i><svg><use href="#t-amp"/></svg><span>幅值</span></div></li>
                      <li><div class="row"><i></i><svg><use href="#t-load"/></svg><span>载荷</span></div></li>
                      <li><div class="row"><i></i><svg><use href="#t-bc"/></svg><span>边界条件</span></div></li>
                      <li><div class="row"><i></i><svg><use href="#t-pre"/></svg><span>预定义场</span></div></li>
                      <li><div class="row"><i></i><svg><use href="#t-remesh"/></svg><span>网格重划分规</span></div></li>
                      <li><div class="row"><i></i><svg><use href="#t-opt"/></svg><span>优化任务</span></div></li>
                      <li><div class="row"><i></i><svg><use href="#t-sketch"/></svg><span>草图</span></div></li>
                    </ul>
                  </li>
                </ul>
              </li>
              <li><div class="row"><i></i><svg><use href="#t-note"/></svg><span>注释</span></div></li>
              <li>
                <div class="row"><button class="toggle" aria-label="Collapse"></button><svg><use href="#t-analysis"/></svg><span>分析</span></div>
                <ul>
                  <li><div class="row"><i></i><svg><use href="#t-job"/></svg><span>作业</span></div></li>
                  <li><div class="row"><i></i><svg><use href="#t-adapt"/></svg><span>自适应过程</span></div></li>
                  <li><div class="row"><i></i><svg><use href="#t-coexec"/></svg><span>Co-executions</span></div></li>
                  <li><div class="row"><i></i><svg><use href="#t-opt"/></svg><span>优化进程</span></div></li>
                </ul>
              </li>
            </ul>
            <div class="hscroll">
              <svg viewBox="0 0 17 17"><path d="M10 4.500l-4 4 4 4" fill="none" stroke="#444" stroke-width="2"/></svg>
              <div class="track"><div class="thumb"></div></div>
              <svg viewBox="0 0 17 17"><path d="M7 4.500l4 4-4 4" fill="none" stroke="#444" stroke-width="2"/></svg>
            </div>
          </div>
        </aside>

        <section class="stage">
          <div class="context">
            <label for="module">模块:</label>
            <span class="combo deep"><span class="spin lower"></span><select id="module"><option>部件</option></select><svg><use href="#chevron"/></svg></span>
            <label for="model">模型:</label>
            <span class="combo deep"><span class="spin"></span><select id="model"><option>Model-1</option></select><svg><use href="#chevron"/></svg></span>
            <label for="part-select">部件:</label>
            <span class="combo deep"><span class="spin"></span><select id="part-select"><option></option></select><svg><use href="#chevron"/></svg></span>
          </div>
          <div class="canvas-row">
            <div class="toolbox">
              <div class="set">
                <button aria-label="Create part"><svg><use href="#part"/></svg></button>
                <button aria-label="Part manager"><svg><use href="#table"/></svg></button>
                <button aria-label="Solid extrude"><svg><use href="#extrude"/></svg></button>
                <button aria-label="Shell extrude"><svg><use href="#shell"/></svg></button>
                <button aria-label="Wire"><svg><use href="#wire"/></svg></button>
                <button aria-label="Cut extrude"><svg><use href="#cutext"/></svg></button>
                <button aria-label="Round"><svg><use href="#round"/></svg></button>
                <button aria-label="Mirror"><svg><use href="#mirror"/></svg></button>
              </div>
              <div class="set">
                <button aria-label="Edit feature"><svg><use href="#support"/></svg></button>
                <button aria-label="Offset"><svg><use href="#offset"/></svg></button>
                <button aria-label="Delete feature"><svg><use href="#erase"/></svg></button>
              </div>
              <div class="set">
                <button aria-label="Partition edge"><svg><use href="#pointline"/></svg></button>
                <button aria-label="Edge"><svg><use href="#edge"/></svg></button>
                <button aria-label="Face"><svg><use href="#face"/></svg></button>
                <button aria-label="Cut"><svg><use href="#scissor"/></svg></button>
              </div>
              <div class="set">
                <button aria-label="Datum point"><svg><use href="#xyz"/></svg></button>
                <button aria-label="Datum axis"><svg><use href="#axes"/></svg></button>
                <button aria-label="Datum plane"><svg><use href="#plane"/></svg></button>
                <button aria-label="Datum CSYS"><svg><use href="#points"/></svg></button>
              </div>
              <div class="set">
                <button aria-label="Move face"><svg><use href="#moveplane"/></svg></button>
                <button aria-label="Stitch"><svg><use href="#wave"/></svg></button>
                <button aria-label="Remove faces"><svg><use href="#clean"/></svg></button>
                <button aria-label="Tools"><svg><use href="#tools"/></svg></button>
              </div>
              <div class="set">
                <button aria-label="Midsurface"><svg><use href="#fillet"/></svg></button>
                <button aria-label="Repair"><svg><use href="#repair"/></svg></button>
              </div>
            </div>
            <div class="viewport"></div>
          </div>
          <div class="brand"><svg><use href="#ds"/></svg><span>SIMULIA</span></div>
        </section>
      </main>

      <footer class="messages">
        <div class="msg-tabs">
          <button class="active" aria-label="Messages"><svg class="msg"><use href="#msg"/></svg></button>
          <button aria-label="Command line"><svg class="cli"><use href="#cli"/></svg></button>
        </div>
        <textarea aria-label="Message area" readonly></textarea>
        <svg class="grip" viewBox="0 0 14 14"><path d="M10 0h2v2h-2zM10 5h2v2h-2zM10 10h2v2h-2zM5 5h2v2H5zM5 10h2v2H5zM0 10h2v2H0z" fill="#aaa"/></svg>
      </footer>
    </div>

    <div class="dialog" role="dialog" aria-labelledby="dlg-title">
      <div class="dlg-title">
        <svg class="i16"><use href="#app"/></svg>
        <span id="dlg-title">打开数据库</span>
        <button aria-label="Close dialog"><svg class="i12"><use href="#close"/></svg></button>
      </div>
      <div class="dlg-dir">
        <label for="dir">目录:</label>
        <span class="combo combo-dir"><svg class="i16"><use href="#folder"/></svg><select id="dir"><option>temp</option></select><svg><use href="#chevron"/></svg></span>
        <div class="dlg-tools">
          <button aria-label="Up"><svg><use href="#d-up"/></svg></button>
          <button aria-label="Home"><svg><use href="#d-home"/></svg></button>
          <button aria-label="Work directory"><svg><use href="#d-hammer"/></svg></button>
          <button aria-label="Bookmarks"><svg><use href="#d-mark"/></svg></button>
          <button aria-label="New folder"><svg><use href="#d-new"/></svg></button>
          <button class="on" aria-label="List"><svg><use href="#d-list"/></svg></button>
          <button aria-label="Icons"><svg><use href="#d-icons"/></svg></button>
          <button aria-label="Details"><svg><use href="#d-detail"/></svg></button>
          <button aria-label="Clipboard"><svg><use href="#d-clip"/></svg></button>
        </div>
      </div>
      <div class="files"><svg class="i16"><use href="#folder"/></svg><span>..</span></div>
      <div class="dlg-form">
        <label for="fname">文件名(<u>F</u>):</label>
        <input type="text" id="fname">
        <label class="check"><input type="checkbox" disabled>粘附到层</label>
        <button class="push">确定(<u>O</u>)</button>
        <label for="filter">文件过滤(<u>I</u>):</label>
        <span class="combo"><select id="filter"><option>Model Database (*.cae)</option></select><svg><use href="#chevron"/></svg></span>
        <label class="check"><input type="checkbox" checked disabled>只读</label>
        <button class="push">取消(<u>C</u>)</button>
      </div>
    </div>
  </div>
</body>
</html>
```
FILE: styles.css
```css
/* Base */
* {
  box-sizing: border-box;
}
body {
  margin: 0;
  font-family: "Noto Sans", "Noto Sans CJK SC", sans-serif;
  font-size: 12px;
  line-height: 16px;
  color: #000;
}
button, select, input, textarea {
  font: inherit;
  color: inherit;
}
button {
  display: flex;
  align-items: center;
  justify-content: center;
  padding: 0;
  border: 0;
  background: none;
}
svg {
  display: block;
  flex: none;
}
.sprite {
  position: absolute;
  width: 0;
  height: 0;
}
.i16 {
  width: 16px;
  height: 16px;
}
.i12 {
  width: 12px;
  height: 12px;
}
.xyz-text {
  font: bold 8px "DejaVu Sans", sans-serif;
}

/* Desktop and the window behind */
.desktop {
  position: relative;
  height: 100vh;
  overflow: hidden;
  background: #f4f4f4;
}
.behind {
  position: absolute;
  inset: 0;
  font-size: 13px;
  color: #333;
  overflow: hidden;
}
.behind-tabs {
  height: 31px;
  padding-top: 8px;
  text-indent: -5px;
  background: #e4e4e4;
}
.behind-bar {
  height: 39px;
  padding-top: 12px;
  background: #fff;
}
.behind-dark {
  width: 8px;
  height: 44px;
  background: #1e202b;
}
.behind-edit {
  height: 66px;
  padding-top: 10px;
  text-indent: -5px;
}
.behind-blue {
  width: 8px;
  height: 10px;
  background: #8cbce4;
}
.behind-lines {
  margin: 13px 0 0;
  font: inherit;
  text-indent: -5px;
}
.behind-foot {
  position: absolute;
  top: 1002px;
  left: 0;
  margin: 0;
  font-size: 12px;
  white-space: nowrap;
}

/* Main window */
.window {
  position: absolute;
  inset: 0 7px 7px 7px;
  display: flex;
  flex-direction: column;
  border: 1px solid #999;
  background: #f0f0f0;
  box-shadow: 0 2px 10px rgba(0, 0, 0, 0.45);
}
.titlebar {
  display: flex;
  align-items: center;
  height: 30px;
  padding-left: 8px;
  background: #fff;
  color: #999;
}
.title {
  flex: 1;
  padding-left: 5px;
}
.winbtn {
  width: 46px;
  height: 30px;
}
.min {
  width: 10px;
  height: 1px;
  background: #999;
}
.max {
  width: 10px;
  height: 10px;
  border: 1px solid #999;
}
.menubar {
  display: flex;
  align-items: center;
  gap: 17px;
  height: 26px;
  padding: 2px 0 0 4px;
  background: linear-gradient(to right, #fff, #efefef);
}
.menubar > svg {
  margin-right: -7px;
}
.mdi-buttons {
  display: flex;
  gap: 8px;
  align-self: flex-start;
  margin: 3px 0 0 auto;
  padding-right: 4px;
}
.mdi-buttons button {
  width: 13px;
  height: 13px;
  border: 1px solid #ddd;
  background: #fff;
}
.mdi-buttons svg {
  width: 11px;
  height: 11px;
}

/* Toolbar */
.toolbar {
  display: flex;
  height: 30px;
  background: linear-gradient(to right, #fff, #f4f4f4 60%, #efefef);
  border-top: 1px solid #b0b0b0;
}
.group {
  display: flex;
  align-items: center;
  padding-left: 8px;
  border-right: 1px solid #b0b0b0;
  border-bottom: 1px solid #b0b0b0;
  background: repeating-linear-gradient(to bottom, #a4a4a4 0 2px, transparent 2px 4px) 3px 6px / 2px 16px no-repeat,
    linear-gradient(to bottom, #fff, #ececec);
}
.group button {
  width: 26px;
  height: 26px;
}
.group button > svg {
  width: 24px;
  height: 24px;
}
button.on {
  border: 1px solid #90c8f6;
  background: #c5e1f7;
}
.bar {
  width: 1px;
  height: 16px;
  background: #aaa;
}
.group .format {
  display: grid;
  width: 47px;
}
.format > * {
  grid-area: 1 / 1;
  justify-self: center;
}
.format > span {
  white-space: nowrap;
}
.group .drop {
  width: 12px;
}
.drop::before {
  content: "";
  border: 4px solid transparent;
  border-top-color: #000;
  border-bottom: 0;
}

/* Combo boxes */
.combo {
  display: flex;
  align-items: center;
  height: 24px;
  padding: 1px;
  border: 1px solid #aaaab0;
  background: #fff;
}
.combo select {
  flex: 1;
  min-width: 0;
  height: 20px;
  padding: 0 0 0 2px;
  border: 0;
  appearance: none;
  background: none;
}
.combo > svg:last-child {
  width: 12px;
  height: 100%;
  border: 1px solid #acacac;
  background: #e1e1e1;
}
.combo .i16 {
  margin-left: 2px;
}
.combo-all {
  width: 72px;
}
.combo-color {
  width: 138px;
  margin-right: 2px;
}
.combo.deep {
  width: 98px;
  border: 2px solid;
  border-color: #777 #bbb #bbb #777;
  padding: 0;
}
.spin {
  display: flex;
  flex-direction: column;
  justify-content: space-between;
  width: 9px;
  height: 19px;
  margin-left: 1px;
  padding: 3px 0;
  background: #f0f0f0;
}
.spin::before, .spin::after {
  content: "";
  align-self: center;
  border: 3px solid transparent;
}
.spin::before {
  border-top: 0;
  border-bottom-color: #777;
}
.spin::after {
  border-bottom: 0;
  border-top-color: #777;
}
.spin.lower::after {
  border-top-color: #000;
}
.spin.big {
  width: 10px;
  margin: 0;
  padding: 2px 0;
  background: none;
}
.spin.big::before, .spin.big::after {
  border-width: 5px;
}
.spin.big::before {
  border-top: 0;
}
.spin.big::after {
  border-bottom: 0;
}

/* Left panel */
.work {
  flex: 1;
  min-height: 0;
  display: flex;
}
.side {
  display: flex;
  flex-direction: column;
  width: 154px;
  padding-right: 5px;
  background: #fdfdfd;
}
.tabs {
  display: flex;
  align-items: flex-end;
  height: 31px;
  padding-left: 3px;
  border-bottom: 1px solid #dcdcdc;
}
.tab {
  width: 40px;
  height: 23px;
  border: 1px solid #dcdcdc;
  border-bottom: 0;
  background: #f2f2f2;
}
.tab.active {
  width: 42px;
  height: 25px;
  background: #fff;
}
.tree-tools {
  display: flex;
  align-items: center;
  gap: 9px;
  height: 33px;
  margin-left: 5px;
}
.combo-db {
  width: 47px;
  flex: none;
  overflow: hidden;
}
.tree-box {
  flex: 1;
  display: flex;
  flex-direction: column;
  min-height: 0;
  margin: 0 0 0 5px;
  border: 1px solid #a0a0a0;
  background: #fff;
}
.tree {
  flex: 1;
  min-height: 0;
  overflow: hidden;
  white-space: nowrap;
}
.tree, .tree ul {
  margin: 0;
  padding: 0;
  list-style: none;
}
.tree {
  padding-left: 2px;
}
.tree ul {
  margin-left: 18px;
}
.tree li {
  background: repeating-linear-gradient(to bottom, #999 0 1px, transparent 1px 2px) 4px 0 / 1px 100% no-repeat;
}
.tree li:last-child {
  background-size: 1px 11px;
}
.tree > li:first-child {
  background-position: 4px 10px;
}
.row {
  display: flex;
  align-items: center;
  height: 21px;
}
.row svg {
  width: 16px;
  height: 16px;
  margin-right: 6px;
}
.row i {
  flex: none;
  width: 12px;
  height: 1px;
  background: repeating-linear-gradient(to right, #999 0 1px, transparent 1px 2px) 4px 0 / 6px 1px no-repeat;
}
.toggle {
  flex: none;
  width: 9px;
  height: 9px;
  margin-right: 3px;
  border: 1px solid #999;
  background: linear-gradient(#335, #335) center / 5px 1px no-repeat #f4f4f4;
}
.toggle.plus {
  background: linear-gradient(#335, #335) center / 5px 1px no-repeat,
    linear-gradient(#335, #335) center / 1px 5px no-repeat #f4f4f4;
}
.current {
  margin-left: 2px;
  border-bottom: 2px solid #000;
}
.hscroll {
  display: flex;
  height: 17px;
  background: #f0f0f0;
}
.hscroll svg {
  width: 17px;
  height: 17px;
}
.track {
  flex: 1;
}
.thumb {
  width: 65%;
  height: 100%;
  background: #cdcdcd;
}

/* Viewport side */
.stage {
  flex: 1;
  display: flex;
  flex-direction: column;
  min-width: 0;
}
.context {
  display: flex;
  align-items: center;
  height: 31px;
  padding: 0 0 2px 8px;
  background: linear-gradient(to bottom, #fff, #ececec);
}
.context label {
  margin-right: 5px;
}
.context .combo {
  margin-right: 13px;
}
.canvas-row {
  flex: 1;
  display: flex;
  min-height: 0;
}
.toolbox {
  width: 62px;
  padding: 0 2px;
  background: linear-gradient(to right, #fff, #ececec);
}
.set {
  display: grid;
  grid-template-columns: 28px 28px;
  grid-auto-rows: 28px;
  padding: 4px 1px 2px;
  border-bottom: 1px solid #a6a6a6;
}
.set:last-child {
  border: 0;
}
.set svg {
  width: 24px;
  height: 24px;
}
.viewport {
  flex: 1;
  border: 1px solid #777;
  border-width: 1px 1px 0 1px;
  background: linear-gradient(to bottom, #1b2c47 0, #23344f 30%, #33445e 60%, #a2b1c9 100%);
}
.brand {
  display: flex;
  align-items: center;
  justify-content: flex-end;
  gap: 5px;
  height: 32px;
  padding: 3px 4px 0 0;
  background: linear-gradient(to bottom, #fff, #ececec);
  color: #051c74;
  font: italic 700 16px "Inter", sans-serif;
}
.brand svg {
  width: 20px;
  height: 22px;
}

/* Message area */
.messages {
  display: flex;
  height: 67px;
  padding: 5px 2px 3px 3px;
}
.msg-tabs {
  width: 38px;
  overflow: hidden;
}
.msg-tabs button {
  width: 36px;
  height: 39px;
  border: 1px solid #ddd;
}
.msg-tabs .active {
  background: #fdfdfd;
}
.msg {
  width: 20px;
  height: 24px;
}
.cli {
  width: 24px;
  height: 20px;
  margin-top: -10px;
}
.messages textarea {
  flex: 1;
  border: 1px solid #a6a6a6;
  background: #fff;
  resize: none;
}
.grip {
  align-self: flex-end;
  width: 14px;
  height: 14px;
  margin-left: 2px;
}

/* Open database dialog */
.dialog {
  position: absolute;
  top: 337px;
  left: 0;
  right: 0;
  width: 500px;
  margin: 0 auto;
  padding-bottom: 8px;
  background: linear-gradient(to right, #fff, #eee);
  box-shadow: 0 0 0 1px #333c4a, 0 4px 16px rgba(0, 0, 0, 0.6);
}
.dlg-title {
  display: flex;
  align-items: center;
  gap: 5px;
  height: 30px;
  padding: 0 8px;
  background: #fff;
}
.dlg-title button {
  width: 14px;
  margin-left: auto;
}
.dlg-dir {
  display: flex;
  align-items: center;
  height: 41px;
  padding-left: 10px;
}
.combo-dir {
  width: 160px;
  margin: 0 4px 0 2px;
}
.combo-dir select {
  padding-left: 4px;
}
.dlg-tools {
  display: flex;
}
.dlg-tools button {
  width: 24px;
  height: 23px;
}
.dlg-tools svg {
  width: 16px;
  height: 16px;
}
.files {
  display: flex;
  gap: 4px;
  height: 189px;
  margin: 0 4px;
  padding: 3px;
  border: 1px solid #aaaab0;
  background: #fff;
}
.dlg-form {
  display: grid;
  grid-template-columns: 69px 250px 78px 84px;
  align-items: center;
  row-gap: 4px;
  padding: 8px 9px 0 10px;
  white-space: nowrap;
}
.dlg-form > input {
  width: 250px;
  height: 25px;
  border: 1px solid #aaaab0;
  background: #fff;
}
.dlg-form .combo {
  height: 25px;
}
.check {
  display: flex;
  align-items: center;
  gap: 3px;
  margin-left: 6px;
  color: #a0a0a0;
}
.check input {
  display: grid;
  place-items: center;
  width: 13px;
  height: 13px;
  margin: 0;
  border: 1px solid #ccc;
  appearance: none;
  background: #fff;
}
.check input:checked::before {
  content: "";
  width: 8px;
  height: 4px;
  border: solid #b5b5b5;
  border-width: 0 0 1px 1px;
  transform: rotate(-45deg);
}
.push {
  width: 84px;
  height: 23px;
  border: 1px solid #adadad;
  background: #e1e1e1;
}
```
